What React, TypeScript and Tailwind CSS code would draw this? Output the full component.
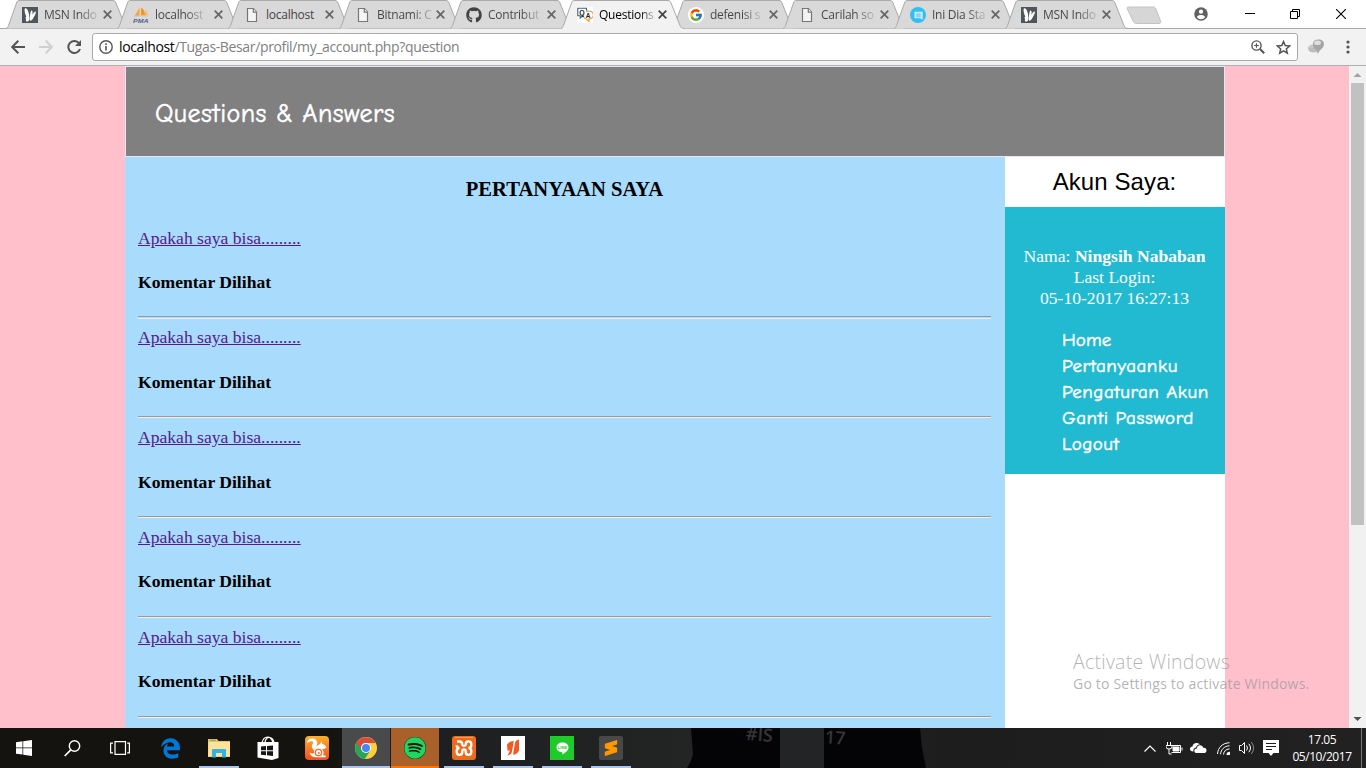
import type { ReactNode } from "react";
import { FaGithub, FaEdgeLegacy, FaSpotify } from "react-icons/fa";
import { FcGoogle } from "react-icons/fc";
import { SiSublimetext } from "react-icons/si";

const PageIcon = () => (
  <svg width="16" height="16" viewBox="0 0 16 16" fill="#f4f4f4" stroke="#777" strokeWidth="1.2">
    <path d="M3.5 1.5h6l3 3.5v9.5h-9z" />
    <path d="M9.3 1.5V5.2h3.2" />
  </svg>
);

const MsnIcon = () => (
  <svg width="16" height="16" viewBox="0 0 16 16">
    <rect width="16" height="16" fill="#505559" />
    <path d="M3.200 1.300C5 .8 6.300 3.500 7 7.200L7.600 11.500C7.500 13.500 6.200 14.800 4.800 14.600 3.600 14.400 3.500 13 4.300 12 3.400 11.800 3.200 10.500 4.300 9.600 3.300 7.500 1.700 2 3.200 1.300z" fill="#fff" />
    <path d="M9.300 3.500c1.200-.2 1.500 1.200 1.200 4.200C11.500 5.500 12.800 4 13.600 4.500c.9.700-.6 3.800-2.100 6.300-1 1.800-2.300 3.200-3.300 3C7.600 12 8 5.200 9.300 3.500z" fill="#fff" />
  </svg>
);

const PmaIcon = () => (
  <svg width="16" height="16" viewBox="0 0 16 16">
    <path d="M6.500.5 1.500 9.200l5.200-.4z" fill="#fba33c" />
    <path d="M8 .500v8.200l4-.4C12 4.500 10.500 2 8 .500z" fill="#f79421" />
    <path d="M12 3v5.400l3 .2C15 6.500 14 4.500 12 3z" fill="#fbb768" />
    <path d="M1 9.800c4-1.100 9-1.300 14-.6" stroke="#cfc9c2" fill="none" />
    <text x="0" y="15.500" fontFamily="Liberation Sans" fontSize="6" fontWeight="700" fontStyle="italic" fill="#595c8c" textLength="15.5" lengthAdjust="spacingAndGlyphs">PMA</text>
  </svg>
);

const QaIcon = () => (
  <svg width="16" height="16" viewBox="0 0 16 16">
    <rect width="16" height="16" fill="#fff" />
    <path d="M.8 1.200h8.700v7.600H5.800L3.200 11V8.800H.8z" fill="#fff" stroke="#3c618c" strokeWidth="1.100" />
    <path d="M9 4.200h3a3.600 3.600 0 0 1 1.200 7.500c-.5.200-.8.200-1.200.2v2.600l-2.500-2.400c-1.500-.2-2.500-1-3-2" fill="#fff" stroke="#efa043" strokeWidth="1.200" />
    <text x="2.200" y="7.600" fontFamily="Liberation Sans" fontSize="7" fontWeight="700" fill="#222">Q</text>
    <text x="8.700" y="10.500" fontFamily="Liberation Sans" fontSize="6.500" fontWeight="700" fill="#222">A</text>
  </svg>
);

const GoogleIcon = () => (
  <span className="flex h-4 w-4 items-center justify-center rounded-full bg-white">
    <FcGoogle size={14} />
  </span>
);

const DiaIcon = () => (
  <svg width="16" height="16" viewBox="0 0 16 16">
    <circle cx="8" cy="8" r="8" fill="#36bdf2" />
    <path d="M4.500 4.800h8.200v8l-2.700-1.600H4.500z" fill="#c5edfc" />
    <path d="M6.200 6.300h4.500v3.900H6.200z" fill="#7fd6f8" />
  </svg>
);

type TabItem = { icon: ReactNode; title: string; active?: boolean; full?: boolean };
const tabs: TabItem[] = [
  { icon: <MsnIcon />, title: "MSN Indo" },
  { icon: <PmaIcon />, title: "localhost" },
  { icon: <PageIcon />, title: "localhost", full: true },
  { icon: <PageIcon />, title: "Bitnami: C" },
  { icon: <FaGithub size={16} color="#444" />, title: "Contribut" },
  { icon: <QaIcon />, title: "Questions", active: true },
  { icon: <GoogleIcon />, title: "defenisi s" },
  { icon: <PageIcon />, title: "Carilah so" },
  { icon: <DiaIcon />, title: "Ini Dia Sta" },
  { icon: <MsnIcon />, title: "MSN Indo" },
];

function Tab({ icon, title, active, full }: TabItem) {
  const tone = full
    ? "text-[#444]"
    : active
      ? "bg-gradient-to-r from-black from-75% to-black/20 bg-clip-text text-transparent"
      : "bg-gradient-to-r from-[#444] from-65% to-[#444]/20 bg-clip-text text-transparent";
  return (
    <div className={`relative -mr-[13px] h-[29px] w-[124px] shrink-0 ${active ? "z-10" : ""}`}>
      <svg className="absolute inset-0" width="124" height="29" viewBox="0 0 124 29">
        <path
          d="M0 28.500C1.500 28 2 27 2.500 25.500L10.500 3C11 1.300 11.800.5 13 .5H107c1.500 0 2.300.8 3 2.500l9 22.500c.8 2 1.500 2.700 4 3z"
          fill={active ? "#f2f2f2" : "#d9d9d9"}
        />
        <path
          d="M0 28.500C1.500 28 2 27 2.500 25.500L10.500 3C11 1.300 11.800.5 13 .5H107c1.500 0 2.300.8 3 2.500l9 22.500c.8 2 1.500 2.700 4 3"
          fill="none"
          stroke="#a9a9a9"
        />
        {active && <path d="M1.500 28.500h120" stroke="#f2f2f2" />}
      </svg>
      <div className="relative flex h-[29px] items-center pl-4">
        <span className="flex h-4 w-4 shrink-0">{icon}</span>
        <span className="ml-1.5 flex w-[52px] shrink-0">
          <span className={`shrink-0 whitespace-nowrap text-[12px] leading-4 tracking-[-0.25px] ${tone}`}>{title}</span>
        </span>
        <svg className="ml-[7px] shrink-0" width="9" height="9" viewBox="0 0 9 9" stroke={active ? "#444" : "#666"} strokeWidth="1.700">
          <path d="M.7.700l7.600 7.600M8.300.700.700 8.300" />
        </svg>
      </div>
    </div>
  );
}

function TabStrip() {
  return (
    <div className="relative flex h-[29px] bg-white pl-[6px] shadow-[inset_0_-1px_0_#a9a9a9]">
      {tabs.map((t, i) => (
        <Tab key={i} {...t} />
      ))}
      <svg className="ml-[10px] mt-[6px]" width="38" height="19" viewBox="0 0 38 19">
        <path d="M2.500 1H27c1.500 0 2.500.7 3 2l4.500 12c.6 1.700 0 2.500-1.500 2.500H10.500c-1.500 0-2.600-.8-3.200-2L1.300 3C.8 1.700 1 1 2.500 1z" fill="#d6d6d6" stroke="#c4c4c4" />
      </svg>
      <div className="ml-auto flex h-[27px] items-center pr-[20px]">
        <svg width="14" height="14" viewBox="0 0 14 14">
          <circle cx="7" cy="7" r="6.800" fill="#616161" />
          <circle cx="7" cy="4.700" r="2.100" fill="#fff" />
          <path d="M2.800 10c.4-1.500 2.800-2.100 4.200-2.100s3.800.6 4.200 2.100A5 5 0 0 1 7 12.200 5 5 0 0 1 2.800 10z" fill="#fff" />
        </svg>
        <svg className="ml-[37px]" width="10" height="10" viewBox="0 0 10 10">
          <path d="M0 4.500h10" stroke="#000" />
        </svg>
        <svg className="ml-[35px]" width="10" height="10" viewBox="0 0 10 10" fill="none" stroke="#000">
          <path d="M.5 2.500h7v7h-7zM2.500 2.500v-2h7v7h-2" />
        </svg>
        <svg className="ml-[36px]" width="10" height="10" viewBox="0 0 10 10" stroke="#000" strokeWidth="1.100">
          <path d="M0 0l10 10M10 0L0 10" />
        </svg>
      </div>
    </div>
  );
}

function Toolbar() {
  return (
    <div className="flex h-[37px] items-center border-b border-[#b0b0b0] bg-[#f2f2f2] pl-[11px]">
      <svg width="14" height="14" viewBox="0 0 14 14" fill="none" stroke="#555" strokeWidth="2">
        <path d="M14 7H1.500M7.300.8 1.200 7l6.100 6.200" />
      </svg>
      <svg className="ml-[14px]" width="14" height="14" viewBox="0 0 14 14" fill="none" stroke="#d0d0d0" strokeWidth="2">
        <path d="M0 7h12.500M6.700.8 12.800 7l-6.100 6.200" />
      </svg>
      <svg className="ml-[14px]" width="15" height="14" viewBox="0 0 15 14" fill="none">
        <path d="M12 3.200A6 6 0 1 0 13 9" stroke="#555" strokeWidth="2" />
        <path d="M14 0v6H8z" fill="#555" />
      </svg>
      <div className="ml-[10px] flex h-[28px] w-[1206px] items-center rounded-[3px] border border-[#a9a9a9] bg-white pl-[6px] pr-[6px]">
        <svg width="14" height="14" viewBox="0 0 14 14" fill="none" stroke="#555">
          <circle cx="7" cy="7" r="6.200" strokeWidth="1.400" />
          <path d="M7 6v4.500M7 3.300v1.600" strokeWidth="1.600" />
        </svg>
        <span className="ml-[6px] whitespace-nowrap text-[14px] leading-5 tracking-[-0.36px] text-[#808080]">
          <span className="text-black">localhost</span>/Tugas-Besar/profil/my_account.php?question
        </span>
        <svg className="ml-auto" width="14" height="14" viewBox="0 0 14 14" fill="none" stroke="#555">
          <circle cx="5.500" cy="5.500" r="4.600" strokeWidth="1.400" />
          <path d="M9 9l4.200 4.200" strokeWidth="2" />
          <path d="M3.200 5.500h4.600M5.500 3.200v4.600" strokeWidth="1.200" />
        </svg>
        <svg className="ml-[11px]" width="15" height="15" viewBox="0 0 15 15" fill="none" stroke="#555" strokeWidth="1.500">
          <path d="M7.500 1.600 9.200 5.600l4.400.4-3.300 2.900 1 4.300-3.800-2.300-3.800 2.300 1-4.300L1.400 6l4.400-.4z" />
        </svg>
      </div>
      <svg className="ml-[10px]" width="16" height="16" viewBox="0 0 16 16">
        <ellipse cx="5.500" cy="9.500" rx="5.500" ry="4" fill="#bcbcbc" />
        <path d="M5 4.500C5 2 7 .5 10.500.5S16 2.300 16 5.300c0 2.700-2 4.500-4 6L9.500 15l-.6-3.600C6.500 10 5 7.500 5 4.500z" fill="#a6a6a6" />
        <ellipse cx="9.500" cy="3.800" rx="3.400" ry="2.300" fill="#dedede" />
        <path d="M1.500 8.500c1-1 2.500-1 3.500-.5" stroke="#e0e0e0" fill="none" />
      </svg>
      <svg className="ml-[22px]" width="4" height="14" viewBox="0 0 4 14" fill="#555">
        <circle cx="2" cy="2" r="1.600" />
        <circle cx="2" cy="7" r="1.600" />
        <circle cx="2" cy="12" r="1.600" />
      </svg>
    </div>
  );
}

type Row = { link: string; note: string; rule: string };
const rows: Row[] = [
  { link: "pt-0", note: "pt-6", rule: "h-[3px] bg-[#a9dbfc]" },
  { link: "-mt-px", note: "pt-[25px]", rule: "h-[2px]" },
  { link: "-mt-px", note: "pt-[25px]", rule: "h-[2px]" },
  { link: "-mt-px", note: "pt-6", rule: "h-[2px]" },
  { link: "-mt-px", note: "pt-6", rule: "h-[2px]" },
];

function Question({ link, note, rule }: Row) {
  return (
    <div className="flow-root h-[100px]">
      <div className="flex h-[88px] flex-col">
        <a className={`block w-fit text-[17.6px] leading-5 text-[#551a8b] underline ${link}`}>Apakah saya bisa.........</a>
        <h4 className={`text-[17.6px] font-bold leading-5 text-black ${note}`}>Komentar Dilihat</h4>
      </div>
      <div className={`w-[853px] border-b border-t border-b-[#eee] border-t-[#9a9a9a] ${rule}`} />
    </div>
  );
}

const menu = [
  { label: "Home", cls: "tracking-[0.1px]" },
  { label: "Pertanyaanku", cls: "tracking-[0.55px]" },
  { label: "Pengaturan Akun", cls: "tracking-[0.5px]" },
  { label: "Ganti Password", cls: "tracking-[0.6px]" },
  { label: "Logout", cls: "tracking-[0.5px]" },
];

function Page() {
  return (
    <div className="relative flex h-[662px] overflow-hidden">
      <main className="flex w-[1349px] bg-[#ffc0cb] pl-[125px] font-['Liberation_Serif',serif]">
        <div className="flex w-[1100px] shrink-0 flex-col">
          <header className="flex h-[91px] items-center border border-[#e6e6fa] bg-[#808080] pl-[29px] pt-1">
            <h1 className="font-['Comic_Sans_MS','Comic_Neue',Lato,cursive] text-[26px] leading-9 tracking-[0.45px] text-white [-webkit-text-stroke:0.5px_white]">Questions &amp; Answers</h1>
          </header>
          <div className="flex h-[571px]">
            <section className="w-[880px] overflow-hidden bg-[#a9dbfc] pl-[13px] pt-[20px]">
              <h2 className="w-[853px] text-center text-[20.600px] font-bold leading-6 text-black">PERTANYAAN SAYA</h2>
              <div className="pt-[27px]">
                {rows.map((r, n) => (
                  <Question key={n} {...r} />
                ))}
              </div>
            </section>
            <aside className="w-[220px] bg-white">
              <h2 className="flex h-[50px] items-center justify-center pr-px font-['Liberation_Sans',sans-serif] text-[24px] tracking-[0.1px] text-black">Akun Saya:</h2>
              <div className="h-[267px] bg-[#22bad0] pt-[39px] text-white">
                <p className="whitespace-nowrap pr-px text-center text-[17.6px] leading-[21px]">
                  Nama: <b>Ningsih Nababan</b>
                  <br />
                  Last Login:
                  <br />
                  05-10-2017 16:27:13
                </p>
                <ul className="pl-[57px] pt-[18px] font-['Comic_Sans_MS','Comic_Neue',Lato,cursive] text-[19px] leading-[26px] [-webkit-text-stroke:0.5px_white]">
                  {menu.map((m) => (
                    <li key={m.label} className={`whitespace-nowrap ${m.cls}`}>{m.label}</li>
                  ))}
                </ul>
              </div>
            </aside>
          </div>
        </div>
      </main>
      <div className="flex w-[17px] flex-col items-center bg-[#f1f1f1]">
        <svg width="17" height="17" viewBox="0 0 17 17">
          <path d="M4.500 11 8.500 7l4 4z" fill="#a3a3a3" />
        </svg>
        <div className="h-[442px] w-[13px] bg-[#c1c1c1]" />
        <svg className="mt-auto" width="17" height="17" viewBox="0 0 17 17">
          <path d="M4.500 6 8.500 10l4-4z" fill="#505050" />
        </svg>
      </div>
      <div className="absolute left-[1073px] top-[584px] whitespace-nowrap text-[#9b9b9b]/75">
        <div className="text-[19.500px] font-light leading-6 tracking-[0.25px]">Activate Windows</div>
        <div className="text-[14px] leading-5 tracking-[0.2px]">Go to Settings to activate Windows.</div>
      </div>
    </div>
  );
}

const Cell = ({ children, line, bg }: { children: ReactNode; line?: string; bg?: string }) => (
  <div className={`mr-px flex h-10 w-12 shrink-0 flex-col items-center ${bg ?? ""}`}>
    <div className="flex h-[38px] items-center pt-[2px]">{children}</div>
    {line && <div className={`h-[2px] ${line}`} />}
  </div>
);

function Taskbar() {
  const run = "w-10 bg-[#a8c4f0]";
  return (
    <div className="relative flex h-10 overflow-hidden bg-[#1d1e1e]">
      <svg className="absolute inset-0" width="1366" height="40" viewBox="0 0 1366 40">
        <defs>
          <linearGradient id="bar" x1="0" x2="1" y1="0" y2="0">
            <stop offset="0" stopColor="#14130f" />
            <stop offset=".24" stopColor="#14130f" />
            <stop offset=".28" stopColor="#1c1e1f" />
            <stop offset=".5" stopColor="#232424" />
            <stop offset=".7" stopColor="#1d1d1d" />
            <stop offset="1" stopColor="#212121" />
          </linearGradient>
        </defs>
        <rect width="1366" height="40" fill="url(#bar)" />
        <path d="M691 0h89v40h-93q5-8 6-14z" fill="#040407" />
        <path d="M780 0h44v40h-44z" fill="#232425" />
        <path d="M824 0h96l2 20 4 20h-102z" fill="#040407" />
      </svg>
      <div className="absolute left-[746px] top-[-6px] rotate-[4deg] whitespace-nowrap text-[18px] font-semibold leading-6 text-[#363636]">#IS</div>
      <div className="absolute left-[825px] top-[-3px] rotate-[4deg] whitespace-nowrap text-[18px] font-semibold leading-6 text-[#363636]">17</div>
      <div className="relative flex w-full">
        <div className="flex w-12 items-center justify-center">
          <svg width="16" height="16" viewBox="0 0 16 16" fill="#fff">
            <path d="M0 2.200 6.500 1.300v6.200H0zM7.200 1.200 16 0v7.500H7.200zM0 8.300h6.500v6.200L0 13.700zM7.200 8.300H16V16l-8.800-1.200z" />
          </svg>
        </div>
        <div className="flex w-12 items-center justify-center">
          <svg width="17" height="17" viewBox="0 0 17 17" fill="none" stroke="#fff" strokeWidth="1.400">
            <circle cx="10.500" cy="6" r="5.200" />
            <path d="M6.800 9.800.700 16" strokeWidth="1.700" />
          </svg>
        </div>
        <div className="mr-[2px] flex w-12 items-center justify-center">
          <svg width="20" height="14" viewBox="0 0 20 14" fill="none" stroke="#fff" strokeWidth="1.200">
            <path d="M5 .6h10.500v12.800H5zM3 2.200H.6v9.600H3M17.200 2.200h2.200v9.600h-2.200" />
          </svg>
        </div>
        <Cell><FaEdgeLegacy size={21} color="#0078d7" /></Cell>
        <Cell line={run}>
          <svg width="22" height="19" viewBox="0 0 22 19">
            <path d="M0 0h9l1.500 2H22v16H0z" fill="#f0c050" />
            <path d="M.5 3H22v14.500H0z" fill="#ffe295" />
            <path d="M2 1.200h6" stroke="#35b6d8" />
            <path d="M4 18.500V11q0-1 1-1h12q1 0 1 1v7.500h-4V14H8v4.500z" fill="#2cb5e8" />
          </svg>
        </Cell>
        <Cell>
          <svg width="22" height="24" viewBox="0 0 22 24">
            <path d="M5 7C6 2.500 8 1 10.500 1S15 3 16 7M8 6c1-4 3-5 5-4.500s3.500 2 4 5" fill="none" stroke="#fff" strokeWidth="1.200" />
            <path d="M.5 6 21.500 6v16L15 24 .5 21.500z" fill="#fff" />
            <path d="M4 10.500l5-.4v4.200H4zM10 10l6-.5v4.800h-6zM4 15.200h5v4l-5-.4zM10 15.200h6v4.700l-6-.6z" fill="#151515" />
          </svg>
        </Cell>
        <Cell>
          <svg width="24" height="24" viewBox="0 0 24 24">
            <defs>
              <linearGradient id="uc" x1="0" y1="0" x2="0" y2="1">
                <stop offset="0" stopColor="#fbb02e" />
                <stop offset="1" stopColor="#f2501e" />
              </linearGradient>
            </defs>
            <rect width="24" height="24" rx="4" fill="url(#uc)" />
            <path d="M2 7C2 3.500 5 2 8 2.600c3.500.7 5 3.600 4 6.200-.8 2-2.500 3.200-2.800 5.200C8 13.500 6.500 12 6.800 10c.2-1.600 1.500-2.500 1.300-3.700C7.800 4.800 5 4.800 2 7z" fill="#fff" />
            <path d="M12.500 9.500 15 8l1.500-2.500L17.300 8c2 .4 3.700 2 4 3.600-1.200 1.300-3 1.600-4.500 1.500 1.800 1.500 2.200 4.500 1.400 6.500h2.500v1.600H10C7 21 5 19 4.500 16.500c1.500 1 3 1.300 4.500 1C8.500 14 9.500 11 12.500 9.500z" fill="#fff" />
            <circle cx="13.500" cy="16.500" r="3.200" fill="none" stroke="#f46b21" strokeWidth="1.300" />
            <circle cx="13.800" cy="17" r="1" fill="#f46b21" />
          </svg>
        </Cell>
        <Cell bg="bg-[#484a4b]" line="w-12 bg-[#a8c4f0]">
          <svg width="22" height="22" viewBox="0 0 22 22">
            <circle cx="11" cy="11" r="11" fill="#fcd03c" />
            <path d="M11 11 1.500 5.500A11 11 0 0 0 9.800 21.900L15.300 13.500z" fill="#25a65b" />
            <path d="M1.500 5.500A11 11 0 0 1 20.600 6H11a5 5 0 0 0-4.500 7.500z" fill="#dd4b3e" />
            <circle cx="11" cy="11" r="5" fill="#fff" />
            <circle cx="11" cy="11" r="4" fill="#4688f1" />
          </svg>
        </Cell>
        <Cell bg="bg-[#a9602a]" line="w-12 bg-[#ff7500]">
          <span className="rounded-full bg-[#10140f]"><FaSpotify size={22} color="#1ed760" /></span>
        </Cell>
        <Cell line={run}>
          <svg width="24" height="24" viewBox="0 0 24 24">
            <rect width="24" height="24" rx="3" fill="#ee6a1d" />
            <path d="M3 1.500h18" stroke="#f8a064" />
            <path d="M5 5.500h2.500a2.800 2.800 0 0 1 2.800 2.800V9a2 2 0 0 0 3.400 0v-.700a2.800 2.800 0 0 1 5.600-.3v1.200A2.800 2.800 0 0 1 16.500 12a2.800 2.800 0 0 1 2.800 2.800V16a2.800 2.800 0 0 1-5.600 0v-.9a1.700 1.700 0 0 0-3.400 0v.9a2.800 2.800 0 0 1-5.600 0v-1.200A2.800 2.800 0 0 1 7.500 12a2.800 2.800 0 0 1-2.800-2.800" fill="none" stroke="#fff" strokeWidth="2.300" />
          </svg>
        </Cell>
        <Cell line={run}>
          <svg width="24" height="24" viewBox="0 0 24 24">
            <rect width="24" height="24" fill="#fff" />
            <path d="M6 8.500C8 6 10.500 5 12.800 5L11 15.500c-.3 2-1.500 3.500-4.800 4C8 17.500 8.500 16 8.500 14L6.500 15z" fill="#f15a24" />
            <path d="M18 3.500v11c-1.500 3-3.500 4-6 4.300L14 7c.4-2 1.500-3 4-3.500z" fill="#f15a24" />
          </svg>
        </Cell>
        <Cell line={run}>
          <span className="flex h-6 w-6 items-center justify-center bg-[#1ecb2b]">
            <svg width="13" height="13" viewBox="0 0 13 13">
              <path d="M6.500.5c3.500 0 6 2.100 6 4.900 0 3-3.200 5.100-6 7.100l-.3-2.200C2.500 10 .5 8 .5 5.400c0-2.800 2.500-4.900 6-4.900z" fill="#fff" />
              <text x="1.700" y="7" fontFamily="Liberation Sans" fontSize="4" fontWeight="700" fill="#1ecb2b" textLength="9.500">LINE</text>
            </svg>
          </span>
        </Cell>
        <Cell line={run}>
          <span className="flex h-6 w-6 items-center justify-center rounded-[2px] bg-[#484848]"><SiSublimetext size={16} color="#ff9800" /></span>
        </Cell>
        <div className="ml-auto flex items-center text-white">
          <svg width="12" height="7" viewBox="0 0 12 7" fill="none" stroke="#fff" strokeWidth="1.200"><path d="M.5 6.500 6 1l5.500 5.500" /></svg>
          <svg className="ml-[10px]" width="17" height="13" viewBox="0 0 17 13" fill="none" stroke="#fff">
            <path d="M5.500 3.500h9v7h-9M16 5.500v3" />
            <path d="M7 5h6v4H7z" fill="#fff" />
            <path d="M1.500 0v3M4.500 0v3M0 3.500h6v1.500q0 2-3 2-3 0-3-2zM3 7v5h2.500" />
          </svg>
          <svg className="ml-[7px]" width="17" height="12" viewBox="0 0 17 12">
            <path d="M3.500 9.500C1 9.500 0 8.500 0 7s1-2.500 2.500-2.500C2.800 2.500 4.200 1 6.500 1 8 1 9 1.500 9.700 2.500 7.500 2.500 6.200 4 6 5.500 4 5.800 3 7.500 3.500 9.500z" fill="#fff" />
            <path d="M7 11c-3.500 0-3.500-4.500-.2-4.600C7 4 8.500 3.200 10 3.200c1.600 0 2.800 1 3.200 2.600 2.500-.2 3.300 1.200 3.300 2.600S15.500 11 14 11z" fill="#fff" />
          </svg>
          <svg className="ml-[10px]" width="13" height="13" viewBox="0 0 13 13" fill="none" stroke="#fff">
            <path d="M.5 12C1 5.500 5.500 1 12.500.7M3.500 12.300C4 7.500 7 4.300 12.500 3.700M6.500 12.500c.3-3.200 2.300-5.300 6-5.700" />
            <path d="M9.500 13c0-2 1-3.200 3.500-3.200V13z" fill="#fff" stroke="none" />
          </svg>
          <svg className="ml-[9px]" width="16" height="14" viewBox="0 0 16 14" fill="none" stroke="#fff">
            <path d="M.5 4.500h2L5.500 1.500v11L2.500 9.500h-2zM7.500 4.500q2 2.500 0 5M9.800 2.800q3.400 4.200 0 8.400" />
            <path d="M12.300 1q4.700 6 0 12" stroke="#888" />
          </svg>
          <svg className="ml-[8px]" width="16" height="16" viewBox="0 0 16 16">
            <path d="M0 0h16v13h-5.500L8 16l-2.500-3H0z" fill="#fff" />
            <path d="M3 3.500h10M3 6.500h10M3 9.500h6" stroke="#1d1d1d" />
          </svg>
          <div className="ml-[10px] flex w-[66px] flex-col items-center whitespace-nowrap pb-px text-[12px] leading-[17px] tracking-[-0.45px]">
            <span>17.05</span>
            <span>05/10/2017</span>
          </div>
          <div className="ml-[6px] mr-[4px] h-10 w-px bg-[#777]" />
        </div>
      </div>
    </div>
  );
}

export default function App() {
  return (
    <div className="h-[768px] w-[1366px] overflow-hidden bg-white font-['Segoe_UI','Open_Sans','Noto_Sans',sans-serif]">
      <TabStrip />
      <Toolbar />
      <Page />
      <Taskbar />
    </div>
  );
}
